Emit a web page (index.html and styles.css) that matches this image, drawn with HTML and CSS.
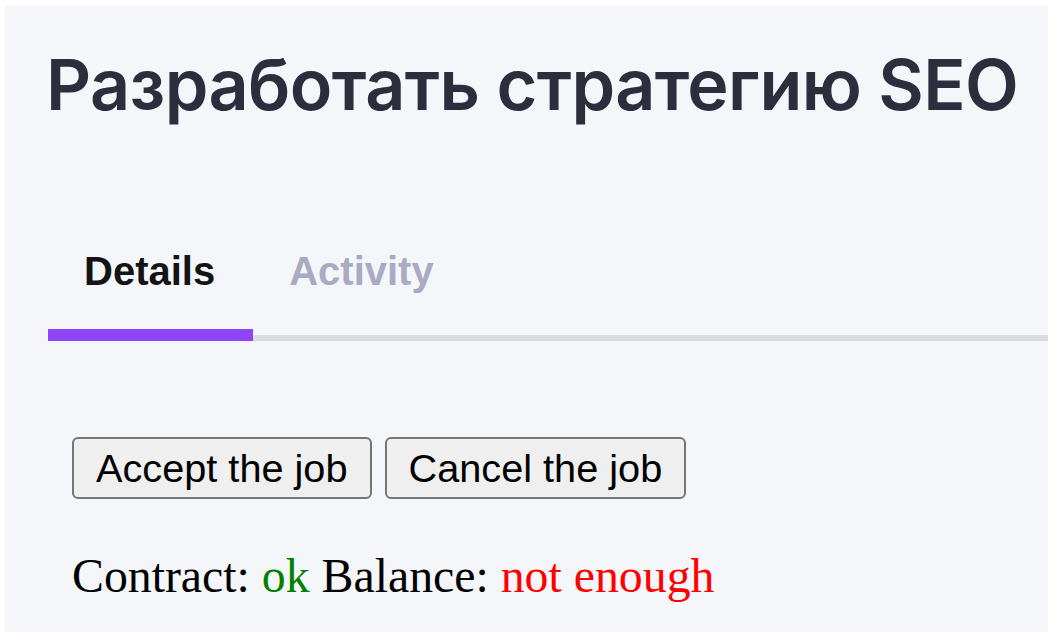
FILE: index.html
```html
<!DOCTYPE html>
<html lang="ru">
<head>
<meta charset="utf-8">
<title>Разработать стратегию SEO</title>
<link rel="stylesheet" href="styles.css">
</head>
<body>
<main class="panel">
  <h1 class="title">Разработать стратегию SEO</h1>
  <nav class="tabs">
    <a class="tab active">Details</a>
    <a class="tab">Activity</a>
  </nav>
  <section class="content">
    <div class="actions">
      <button class="btn">Accept the job</button>
      <button class="btn">Cancel the job</button>
    </div>
    <p class="status">Contract: <span class="ok">ok</span> Balance: <span class="bad">not enough</span></p>
  </section>
</main>
</body>
</html>
```

FILE: styles.css
```css
html, body {
  margin: 0;
  padding: 0;
  background: #ffffff;
}

body {
  padding: 6px 12px 10px 5px;
  height: 642px;
  box-sizing: border-box;
}

.panel {
  background: #f5f6fa;
  height: 626px;
  box-sizing: border-box;
  padding: 37px 0 0 43px;
  overflow: hidden;
}

.title {
  margin: 0 0 0 -2px;
  font-family: "Inter", "Noto Sans", sans-serif;
  font-weight: 600;
  font-size: 70px;
  line-height: 84px;
  color: #2c2e3d;
  letter-spacing: -0.6px;
}

.tabs {
  display: flex;
  margin-top: 100px;
  border-bottom: 6px solid #dcdde3;
}

.tab {
  font-family: "Liberation Sans", Arial, sans-serif;
  font-weight: 700;
  font-size: 40px;
  line-height: 48px;
  padding: 20px 37px 34px 36px;
  color: #a9abc3;
}

.tab.active {
  color: #141414;
  border-bottom: 12px solid #8e45f7;
  margin-bottom: -6px;
  padding-right: 38px;
}

.content {
  padding: 96px 0 0 24px;
}

.actions {
  display: flex;
  gap: 13px;
}

.btn {
  font-family: "Liberation Sans", Arial, sans-serif;
  font-size: 39.7px;
  height: 62px;
  padding: 0 22px;
  color: #000;
  background: #efefef;
  border: 2px solid #767676;
  border-radius: 6px;
}

.status {
  margin: 49px 0 0;
  font-family: "Liberation Serif", "Times New Roman", serif;
  font-size: 47.8px;
  color: #000;
}

.ok {
  color: #008000;
}

.bad {
  color: #ff0000;
}
```
